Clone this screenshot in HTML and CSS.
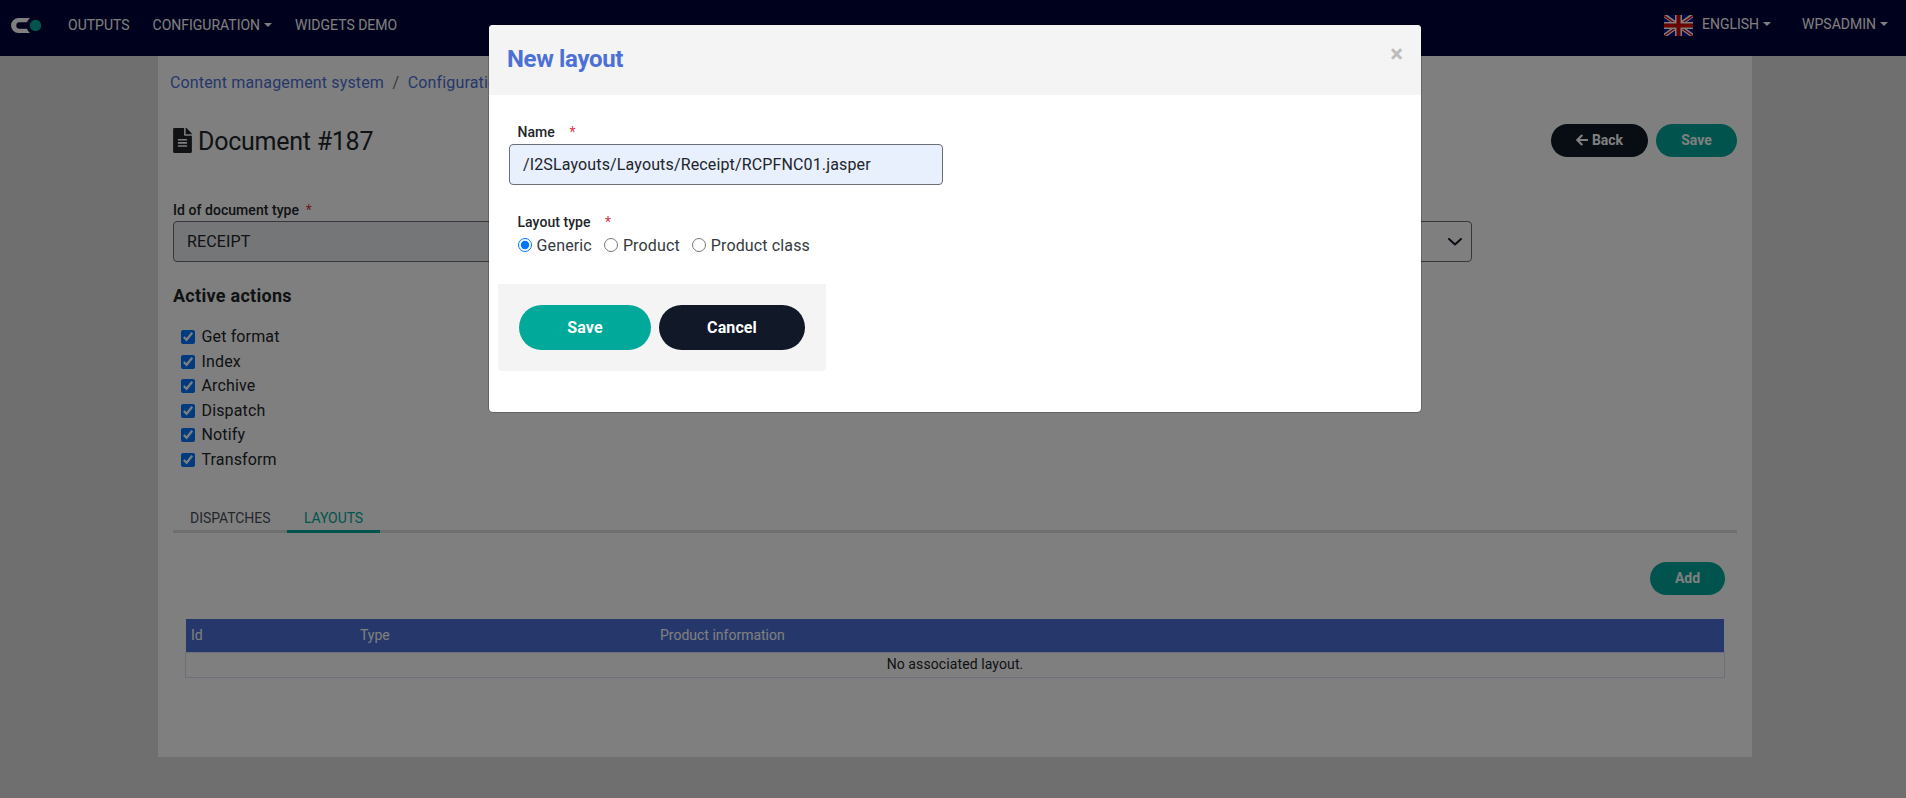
FILE: index.html
```html
<!DOCTYPE html>
<html lang="en">
<head>
<meta charset="utf-8">
<title>Document #187</title>
<link rel="stylesheet" href="styles.css">
</head>
<body>
<div class="app">
  <nav class="navbar">
    <svg class="logo" width="31" height="15" viewBox="0 0 31 15">
      <path d="M19 0H7.500a7.500 7.500 0 0 0 0 15H19a10 10 0 0 1-3-4.300H8.500a3.200 3.200 0 0 1 0-6.400H16A10 10 0 0 1 19 0z" fill="#fff"/>
      <circle cx="24.500" cy="7.500" r="5.700" fill="#00a99a"/>
    </svg>
    <a class="nav-link outputs">OUTPUTS</a>
    <a class="nav-link config">CONFIGURATION<i class="caret"></i></a>
    <a class="nav-link">WIDGETS DEMO</a>
    <div class="nav-right">
      <svg class="flag" width="29" height="21" viewBox="0 0 29 21">
        <rect width="29" height="21" fill="#00108a"/>
        <path d="M0 0L29 21M29 0L0 21" stroke="#fff" stroke-width="4"/>
        <path d="M0 0.600L29 21M29 0.600L0 21" stroke="#d80000" stroke-width="1.300"/>
        <path d="M14.500 0V21M0 10.500H29" stroke="#fff" stroke-width="7"/>
        <path d="M14.500 0V21M0 10.500H29" stroke="#d80000" stroke-width="4"/>
      </svg>
      <a class="nav-link english">ENGLISH<i class="caret"></i></a>
      <a class="nav-link">WPSADMIN<i class="caret"></i></a>
    </div>
  </nav>
  <main class="panel">
    <div class="breadcrumb"><a>Content management system</a><span class="sep">/</span><a>Configuration</a></div>
    <header class="title-row">
      <h1 class="title">
        <svg width="19" height="25" viewBox="0 0 384 512"><path fill="currentColor" d="M224 136V0H24C10.700 0 0 10.700 0 24v464c0 13.300 10.700 24 24 24h336c13.300 0 24-10.700 24-24V160H248c-13.200 0-24-10.800-24-24zm64 236c0 6.600-5.400 12-12 12H108c-6.600 0-12-5.400-12-12v-8c0-6.600 5.400-12 12-12h168c6.600 0 12 5.400 12 12v8zm0-64c0 6.600-5.400 12-12 12H108c-6.600 0-12-5.400-12-12v-8c0-6.600 5.400-12 12-12h168c6.600 0 12 5.400 12 12v8zm0-72v8c0 6.600-5.400 12-12 12H108c-6.600 0-12-5.400-12-12v-8c0-6.600 5.400-12 12-12h168c6.600 0 12 5.400 12 12zm96-114.100v6.100H256V0h6.100c6.400 0 12.500 2.500 17 7l97.900 98c4.500 4.500 7 10.600 7 16.900z"/></svg>
        <span>Document #187</span>
      </h1>
      <div class="actions">
        <button class="btn small dark back"><svg width="12" height="12" viewBox="0 0 12 12"><path d="M6.300 0.900L1.300 6L6.300 11.100M1.500 6H12" fill="none" stroke="currentColor" stroke-width="2.200"/></svg>Back</button>
        <button class="btn small teal save">Save</button>
      </div>
    </header>
    <div class="label">Id of document type <span class="req">*</span></div>
    <div class="fields">
      <div class="field disabled">RECEIPT</div>
      <div class="field select"><svg width="14" height="8" viewBox="0 0 14 8"><path d="M1 1l6 5.500L13 1" fill="none" stroke="#111827" stroke-width="2" stroke-linecap="round" stroke-linejoin="round"/></svg></div>
    </div>
    <h2 class="subtitle">Active actions</h2>
    <div class="checks">
      <label class="check"><input type="checkbox" checked>Get format</label>
      <label class="check"><input type="checkbox" checked>Index</label>
      <label class="check"><input type="checkbox" checked>Archive</label>
      <label class="check"><input type="checkbox" checked>Dispatch</label>
      <label class="check"><input type="checkbox" checked>Notify</label>
      <label class="check"><input type="checkbox" checked>Transform</label>
    </div>
    <div class="tabs"><a class="tab">DISPATCHES</a><a class="tab active">LAYOUTS</a></div>
    <div class="add-row"><button class="btn small teal add">Add</button></div>
    <div class="table">
      <div class="thead"><span>Id</span><span>Type</span><span>Product information</span></div>
      <div class="empty">No associated layout.</div>
    </div>
  </main>
</div>
<div class="backdrop"></div>
<section class="modal">
  <header class="modal-header"><h3 class="modal-title">New layout</h3><span class="close">×</span></header>
  <div class="modal-body">
    <div class="label mlabel">Name<span class="req">*</span></div>
    <div class="field filled">/I2SLayouts/Layouts/Receipt/RCPFNC01.jasper</div>
    <div class="label mlabel type">Layout type<span class="req">*</span></div>
    <div class="radios">
      <label class="radio r1"><input type="radio" name="t" checked>Generic</label>
      <label class="radio r2"><input type="radio" name="t">Product</label>
      <label class="radio"><input type="radio" name="t">Product class</label>
    </div>
    <div class="modal-footer">
      <button class="btn large teal msave">Save</button>
      <button class="btn large dark mcancel">Cancel</button>
    </div>
  </div>
</section>
</body>
</html>
```

FILE: styles.css
```css
* { box-sizing: border-box; }
html, body { height: 100%; overflow: hidden; }
body {
  margin: 0;
  background: #dedede;
  color: #212529;
  font: 400 16px/24px Roboto, "Liberation Sans", sans-serif;
}
h1, h2, h3 { margin: 0; font-weight: 400; }
svg { display: block; flex: none; }

.navbar {
  display: flex;
  align-items: flex-start;
  height: 56px;
  padding-left: 11px;
  background: #010238;
}
.logo { margin: 18px 26px 0 0; }
.nav-link {
  display: flex;
  align-items: center;
  margin-top: 13px;
  color: #fff;
  font-size: 14px;
  line-height: 24px;
  white-space: nowrap;
}
.outputs, .config { margin-right: 23px; }
.caret {
  margin-left: 4px;
  border: 4px solid transparent;
  border-top-color: #fff;
  border-bottom: 0;
}
.nav-right { display: flex; margin: -1px 18px 0 auto; }
.flag { margin: 16px 9px 0 0; }
.english { margin-right: 31px; }

.panel {
  width: 1594px;
  height: 701px;
  margin-left: 158px;
  padding: 15px 15px 0;
  background: #fff;
}
.breadcrumb { margin-left: -3px; letter-spacing: .15px; }
.breadcrumb a { color: #4c70d6; }
.sep { margin: 0 8.500px; color: #6c757d; }
.title-row { display: flex; justify-content: space-between; height: 33px; margin-top: 29px; }
.title { display: flex; gap: 6px; font-size: 25px; line-height: 35px; letter-spacing: -.25px; }
.title svg { margin-top: 4px; }
.actions { display: flex; gap: 8px; }

.btn {
  display: flex;
  align-items: center;
  justify-content: center;
  border: 0;
  padding: 0;
  color: #fff;
  font: 700 14px/20px Roboto, "Liberation Sans", sans-serif;
}
.small { height: 33px; padding-bottom: 1px; border-radius: 17px; }
.large { height: 45px; border-radius: 23px; font-size: 16px; letter-spacing: .1px; }
.dark { background: #111827; }
.teal { background: #00a99a; }
.back { width: 97px; gap: 4px; }
.save { width: 81px; }
.add { width: 75px; }
.msave { width: 132px; }
.mcancel { width: 146px; }

.label { margin-top: 43px; font-size: 14px; font-weight: 500; line-height: 20px; letter-spacing: .05px; }
.req { margin-left: 3px; color: #dc3545; font-weight: 400; }
.fields { display: flex; justify-content: space-between; width: 1299px; margin-top: 1px; }
.field {
  display: flex;
  align-items: center;
  height: 41px;
  padding: 0 13px;
  border: 1px solid #6c6f75;
  border-radius: 4px;
  letter-spacing: .14px;
}
.disabled { width: 640px; background: #e9ecef; }
.select { width: 640px; justify-content: flex-end; padding-right: 9px; }

.subtitle { margin-top: 22px; font-size: 18px; font-weight: 700; line-height: 24px; letter-spacing: .28px; }
.checks { margin: 17px 0 0 8px; }
.check { display: flex; align-items: center; height: 24.500px; letter-spacing: .14px; }
.check input { width: 14px; height: 14px; margin: 0 6.500px 0 0; accent-color: #0075ff; }

.tabs { display: flex; height: 25px; margin-top: 36px; box-shadow: inset 0 -3px #dedede; }
.tab { padding: 0 16.500px 0 17px; color: #495057; font-size: 14px; line-height: 20px; letter-spacing: -.06px; }
.active { box-shadow: inset 0 -3px #00a99a; color: #00a99a; }
.add-row { display: flex; justify-content: flex-end; margin: 29px 12px 24px 0; }
.table { width: 1540px; margin-left: 12px; font-size: 14px; }
.thead {
  display: grid;
  grid-template-columns: 169px 300px 1fr;
  height: 33px;
  margin: 0 1px;
  padding-left: 5px;
  background: #4c70d6;
  color: #fff;
  line-height: 33px;
}
.empty { height: 26px; border: 1px solid #dcdcf8; line-height: 22px; letter-spacing: .1px; text-align: center; }

.backdrop { position: absolute; inset: 0; background: rgba(0, 0, 0, .5); }
.modal {
  position: absolute;
  top: 24px;
  left: 488px;
  width: 934px;
  height: 389px;
  border: 1px solid rgba(0, 0, 0, .2);
  border-radius: 5px;
  background: #fff;
  background-clip: padding-box;
}
.modal-header {
  display: flex;
  justify-content: space-between;
  height: 70px;
  padding: 16px 18px;
  border-radius: 4px 4px 0 0;
  background: #f4f4f4;
}
.modal-title { color: #4c70d6; font-size: 24px; font-weight: 700; line-height: 36px; letter-spacing: -.35px; }
.close { color: #bcbcbc; font-size: 24px; font-weight: 700; line-height: 26px; }
.modal-body { padding: 27px 9px 0; }
.mlabel { margin: 0 0 2px 19.500px; }
.mlabel .req { margin-left: 14.500px; }
.filled { width: 434px; margin-left: 11px; background: #e8effd; }
.type { margin-top: 27px; }
.radios { display: flex; margin-left: 20px; }
.radio { display: flex; align-items: center; height: 24px; letter-spacing: .14px; color: #343a40; }
.radio input { width: 14px; height: 14px; margin: 0 4.500px 3px 0; }
.r1, .r2 { margin-right: 12.500px; }
.modal-footer {
  display: flex;
  gap: 8px;
  width: 328px;
  height: 87px;
  margin-top: 26px;
  padding: 21px;
  border-radius: 0 0 4px 4px;
  background: #f4f4f4;
}
```
